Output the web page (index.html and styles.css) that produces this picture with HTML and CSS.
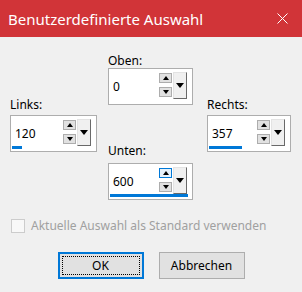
FILE: index.html
```html
<!DOCTYPE html>
<html lang="de">
  <head>
    <meta charset="UTF-8" />
    <title>Benutzerdefinierte Auswahl</title>
    <link rel="stylesheet" href="styles.css">
  </head>
  <body>
    <div class="titlebar">
      <span class="title">Benutzerdefinierte Auswahl</span>
      <svg class="close" width="11" height="11" viewBox="0 0 11 11">
        <path d="M0.5 0.5 L10.5 10.5 M10.5 0.5 L0.5 10.5" stroke="#fff" stroke-width="1" />
      </svg>
    </div>

    <div class="panes">
      <div class="pane pane-left">
        <label class="lbl">Links:</label>
        <div class="field">
          <div class="row">
            <span class="value">120</span>
            <div class="spin">
              <span class="sbtn up"></span>
              <span class="sbtn down"></span>
            </div>
            <span class="drop"></span>
          </div>
          <div class="track"><div class="bar" style="width: 10px"></div></div>
        </div>
      </div>

      <div class="pane pane-mid">
        <label class="lbl">Oben:</label>
        <div class="field">
          <div class="row">
            <span class="value">0</span>
            <div class="spin">
              <span class="sbtn up"></span>
              <span class="sbtn down"></span>
            </div>
            <span class="drop"></span>
          </div>
          <div class="track"></div>
        </div>

        <label class="lbl lbl-unten">Unten:</label>
        <div class="field">
          <div class="row">
            <span class="value">600</span>
            <div class="spin">
              <span class="sbtn up hot"></span>
              <span class="sbtn down"></span>
            </div>
            <span class="drop"></span>
          </div>
          <div class="track"><div class="bar" style="width: 78px"></div></div>
        </div>
      </div>

      <div class="pane pane-right">
        <label class="lbl">Rechts:</label>
        <div class="field">
          <div class="row">
            <span class="value">357</span>
            <div class="spin">
              <span class="sbtn up"></span>
              <span class="sbtn down"></span>
            </div>
            <span class="drop"></span>
          </div>
          <div class="track"><div class="bar" style="width: 33px"></div></div>
        </div>
      </div>
    </div>

    <div class="check">
      <span class="box"></span>
      <span class="check-text">Aktuelle Auswahl als Standard verwenden</span>
    </div>

    <div class="buttons">
      <button class="btn btn-ok"><span class="focus">OK</span></button>
      <button class="btn">Abbrechen</button>
    </div>
  </body>
</html>
```

FILE: styles.css
```css
* {
  margin: 0;
  padding: 0;
  box-sizing: border-box;
}
body {
  background-color: #f0f0f0;
  font-family: "Noto Sans", "Open Sans", sans-serif;
  font-size: 12px;
  color: #000;
  width: 302px;
  height: 292px;
  overflow: hidden;
}
.titlebar {
  height: 37px;
  background-color: #d13438;
  color: #fff;
  display: flex;
  align-items: center;
  justify-content: space-between;
  padding: 0 14px 0 8px;
}
.title {
  font-size: 15px;
}
.close {
  display: block;
}
.panes {
  display: flex;
  padding-left: 10px;
}
.pane {
  display: flex;
  flex-direction: column;
}
.pane-left {
  width: 87px;
  margin-right: 11px;
  padding-top: 60px;
}
.pane-mid {
  width: 85px;
  margin-right: 14px;
  padding-top: 16px;
}
.pane-right {
  width: 84px;
  padding-top: 60px;
}
.lbl {
  display: block;
  line-height: 15px;
  height: 15px;
  margin-bottom: 3px;
}
.pane-mid .lbl {
  margin-bottom: 0;
}
.pane-mid .lbl-unten {
  margin-top: 38px;
  margin-bottom: 5px;
}
.field {
  height: 37px;
  background: #fff;
  border: 1px solid #adadad;
  display: flex;
  flex-direction: column;
}
.row {
  flex: 1;
  display: flex;
  padding: 3px 5px 0 0;
}
.value {
  flex: 1;
  align-self: center;
  padding-left: 4px;
  padding-top: 1px;
}
.spin {
  width: 13px;
  display: flex;
  flex-direction: column;
  gap: 4px;
  padding-top: 1px;
  margin-right: 1px;
}
.sbtn {
  height: 10px;
  background: #e1e1e1;
  border: 1px solid #adadad;
  display: flex;
  align-items: center;
  justify-content: center;
}
.sbtn::after {
  content: "";
  border-left: 3.5px solid transparent;
  border-right: 3.5px solid transparent;
}
.up::after {
  border-bottom: 4px solid #000;
}
.down::after {
  border-top: 4px solid #000;
}
.sbtn.hot {
  background: #e5f1fb;
  border-color: #0078d7;
}
.drop {
  width: 14px;
  height: 27px;
  background: #f0f0f0;
  border: 1px solid;
  border-color: #e3e3e3 #696969 #696969 #e3e3e3;
  display: flex;
  align-items: center;
  justify-content: center;
}
.drop::after {
  content: "";
  border-left: 4.5px solid transparent;
  border-right: 4.5px solid transparent;
  border-top: 5px solid #000;
}
.track {
  height: 3px;
  margin: 0 1px 2px 1px;
}
.bar {
  height: 3px;
  background: #0078d7;
}
.check {
  display: flex;
  align-items: center;
  gap: 6px;
  padding: 17px 0 0 11px;
}
.box {
  width: 14px;
  height: 14px;
  border: 1px solid #cccccc;
  background: #f8f8f8;
}
.check-text {
  color: #a0a0a0;
}
.buttons {
  display: flex;
  justify-content: center;
  gap: 15px;
  padding-top: 18px;
}
.btn {
  width: 86px;
  height: 27px;
  background: #e1e1e1;
  border: 1px solid #adadad;
  font-family: "Noto Sans", "Open Sans", sans-serif;
  font-size: 12px;
  color: #000;
}
.btn-ok {
  border: 2px solid #0078d7;
  padding: 2px;
}
.focus {
  display: flex;
  align-items: center;
  justify-content: center;
  height: 100%;
  border: 1px dotted #000;
}
```
